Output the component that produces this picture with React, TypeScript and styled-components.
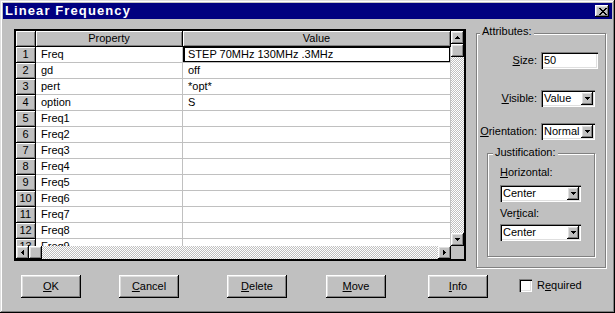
import React from "react";
import styled, { createGlobalStyle } from "styled-components";

const Global = createGlobalStyle`
  html, body { margin: 0; padding: 0; background: #c0c0c0; }
  body { font-family: "Liberation Sans", Arial, sans-serif; font-size: 11px; color: #000; }
  * { box-sizing: border-box; }
  u { text-decoration-thickness: 1px; text-underline-offset: 1px; }
`;

const raised = `box-shadow: inset -1px -1px #000, inset 1px 1px #fff, inset -2px -2px #808080, inset 2px 2px #dfdfdf;`;
const sunken = `box-shadow: inset 1px 1px #808080, inset 2px 2px #000, inset -1px -1px #fff, inset -2px -2px #dfdfdf;`;

const Window = styled.div`
  width: 615px;
  height: 313px;
  padding: 3px;
  background: #c0c0c0;
  box-shadow: inset -1px -1px #000, inset 1px 1px #dfdfdf, inset -2px -2px #808080, inset 2px 2px #fff;
  display: flex;
  flex-direction: column;
`;

const TitleBar = styled.div`
  height: 16px;
  background: #000080;
  display: flex;
  align-items: center;
  justify-content: space-between;
  padding: 0 3px 0 2px;
`;

const Title = styled.div`
  color: #fff;
  font-weight: bold;
  font-size: 13px;
  letter-spacing: 1.1px;
  line-height: 16px;
`;

const CloseButton = styled.div`
  width: 14px;
  height: 12px;
  background: #c0c0c0;
  ${raised}
  display: flex;
  align-items: center;
  justify-content: center;
  padding-left: 1px;
`;

const Main = styled.div`
  display: flex;
  align-items: flex-start;
  padding-left: 11px;
  gap: 10px;
`;

const GridFrame = styled.div`
  margin-top: 10px;
  width: 452px;
  height: 232px;
  border: 2px solid #000;
  display: grid;
  grid-template-columns: 435px 13px;
  grid-template-rows: 215px 13px;
  background: #c0c0c0;
`;

const Viewport = styled.div`
  overflow: hidden;
  background: #fff;
`;

const Row = styled.div`
  display: grid;
  grid-template-columns: 20px 147px 268px;
  height: 16px;
`;

const HeadCell = styled.div`
  background: #c0c0c0;
  border-right: 1px solid #000;
  border-bottom: 1px solid #000;
  box-shadow: inset 1px 1px #fff, inset -1px -1px #808080;
  display: flex;
  align-items: center;
  justify-content: center;
  line-height: 15px;
  white-space: nowrap;
  overflow: hidden;
`;

const Cell = styled.div<{ $focus?: boolean }>`
  border-right: 1px solid #c0c0c0;
  border-bottom: 1px solid #c0c0c0;
  padding-left: 5px;
  line-height: 15px;
  white-space: nowrap;
  overflow: hidden;
  ${(p) => (p.$focus ? "box-shadow: inset 2px 0 #000, inset 0 1px #000, inset -1px -1px #000;" : "")}
`;

const VScroll = styled.div`
  display: flex;
  flex-direction: column;
`;

const HScroll = styled.div`
  display: flex;
`;

const ScrollBtn = styled.div`
  width: 13px;
  height: 13px;
  flex: none;
  background: #c0c0c0;
  ${raised}
  display: flex;
  align-items: center;
  justify-content: center;
`;

const Thumb = styled.div`
  width: 13px;
  height: 13px;
  flex: none;
  background: #c0c0c0;
  ${raised}
`;

const Track = styled.div`
  flex: 1;
  background-color: #fff;
  background-image: repeating-conic-gradient(#c0c0c0 0 25%, #fff 0 50%);
  background-size: 2px 2px;
`;

const Corner = styled.div`
  background: #c0c0c0;
`;

const GroupBox = styled.div<{ $w: number; $h: number; $mt: number; $pad: string }>`
  position: relative;
  flex: none;
  width: ${(p) => p.$w}px;
  height: ${(p) => p.$h}px;
  margin-top: ${(p) => p.$mt}px;
  padding: ${(p) => p.$pad};
  border: 1px solid #808080;
  box-shadow: inset 1px 1px #fff, 1px 1px #fff;
`;

const GroupLabel = styled.div<{ $top: number; $left: number }>`
  position: absolute;
  top: ${(p) => p.$top}px;
  left: ${(p) => p.$left}px;
  padding: 0 2px;
  line-height: 13px;
  background: #c0c0c0;
  white-space: nowrap;
`;

const FieldRow = styled.div<{ $mt: number }>`
  display: grid;
  grid-template-columns: 1fr 57px;
  column-gap: 4px;
  align-items: center;
  margin: ${(p) => p.$mt}px -2px 0 -10px;
`;

const FieldLabel = styled.div`
  display: flex;
  justify-content: flex-end;
  white-space: nowrap;
  line-height: 17px;
`;

const TextInput = styled.div`
  width: 57px;
  height: 17px;
  background: #fff;
  ${sunken}
  padding: 2px 2px 2px 3px;
  line-height: 13px;
`;

const Combo = styled.div<{ $w: number; $mt?: number }>`
  width: ${(p) => p.$w}px;
  height: 17px;
  margin-top: ${(p) => p.$mt ?? 0}px;
  background: #fff;
  ${sunken}
  padding: 2px;
  display: flex;
`;

const ComboText = styled.div`
  flex: 1;
  padding-left: 1px;
  line-height: 13px;
  white-space: nowrap;
  overflow: hidden;
`;

const DropBtn = styled.div`
  width: 12px;
  flex: none;
  background: #c0c0c0;
  ${raised}
  display: flex;
  align-items: center;
  justify-content: center;
`;

const SubLabel = styled.div<{ $mt?: number }>`
  line-height: 13px;
  margin-top: ${(p) => p.$mt ?? 0}px;
  white-space: nowrap;
`;

const ButtonRow = styled.div`
  display: flex;
  align-items: center;
  margin-top: 7px;
  padding-left: 18px;
  height: 23px;
`;

const Button = styled.div<{ $ml: number }>`
  width: 60px;
  height: 23px;
  margin-left: ${(p) => p.$ml}px;
  background: #c0c0c0;
  ${raised}
  display: flex;
  align-items: center;
  justify-content: center;
  line-height: 13px;
`;

const CheckBox = styled.div<{ $ml: number }>`
  width: 13px;
  height: 13px;
  margin-left: ${(p) => p.$ml}px;
  margin-top: -3px;
  background: #fff;
  ${sunken}
`;

const CheckLabel = styled.div`
  margin-left: 5px;
  margin-top: -3px;
  line-height: 13px;
`;

type Dir = "up" | "down" | "left" | "right";

function Tri({ dir, n }: { dir: Dir; n: number }) {
  const w = 2 * n - 1;
  const rects: React.ReactNode[] = [];
  for (let i = 0; i < n; i++) {
    const len = 2 * i + 1;
    const off = n - 1 - i;
    const pos = dir === "up" || dir === "left" ? i : n - 1 - i;
    if (dir === "up" || dir === "down") {
      rects.push(<rect key={i} x={off} y={pos} width={len} height={1} />);
    } else {
      rects.push(<rect key={i} x={pos} y={off} width={1} height={len} />);
    }
  }
  const vert = dir === "up" || dir === "down";
  return (
    <svg width={vert ? w : n} height={vert ? n : w} shapeRendering="crispEdges" fill="#000">
      {rects}
    </svg>
  );
}

function CloseGlyph() {
  const rows = ["11000011", "01100110", "00111100", "00011000", "00111100", "01100110", "11000011"];
  return (
    <svg width={8} height={7} shapeRendering="crispEdges" fill="#000">
      {rows.flatMap((r, y) =>
        r.split("").map((c, x) => (c === "1" ? <rect key={`${x}-${y}`} x={x} y={y} width={1} height={1} /> : null))
      )}
    </svg>
  );
}

const data: [string, string][] = [
  ["Freq", "STEP 70MHz 130MHz .3MHz"],
  ["gd", "off"],
  ["pert", "*opt*"],
  ["option", "S"],
  ["Freq1", ""],
  ["Freq2", ""],
  ["Freq3", ""],
  ["Freq4", ""],
  ["Freq5", ""],
  ["Freq6", ""],
  ["Freq7", ""],
  ["Freq8", ""],
  ["Freq9", ""],
];

export default function App() {
  return (
    <>
      <Global />
      <Window>
        <TitleBar>
          <Title>Linear Frequency</Title>
          <CloseButton>
            <CloseGlyph />
          </CloseButton>
        </TitleBar>
        <Main>
          <GridFrame>
            <Viewport>
              <Row>
                <HeadCell />
                <HeadCell>Property</HeadCell>
                <HeadCell>Value</HeadCell>
              </Row>
              {data.map(([k, v], i) => (
                <Row key={i}>
                  <HeadCell>{i + 1}</HeadCell>
                  <Cell>{k}</Cell>
                  <Cell $focus={i === 0}>{v}</Cell>
                </Row>
              ))}
            </Viewport>
            <VScroll>
              <ScrollBtn>
                <Tri dir="up" n={3} />
              </ScrollBtn>
              <Thumb />
              <Track />
              <ScrollBtn>
                <Tri dir="down" n={3} />
              </ScrollBtn>
            </VScroll>
            <HScroll>
              <ScrollBtn>
                <Tri dir="left" n={3} />
              </ScrollBtn>
              <Thumb />
              <Track />
              <ScrollBtn>
                <Tri dir="right" n={3} />
              </ScrollBtn>
            </HScroll>
            <Corner />
          </GridFrame>

          <GroupBox $w={130} $h={235} $mt={14} $pad="18px 9px 0 10px">
            <GroupLabel $top={-9} $left={3}>Attributes:</GroupLabel>
            <FieldRow $mt={0}>
              <FieldLabel>
                <u>S</u>ize:
              </FieldLabel>
              <TextInput>50</TextInput>
            </FieldRow>
            <FieldRow $mt={21}>
              <FieldLabel>
                <u>V</u>isible:
              </FieldLabel>
              <Combo $w={54}>
                <ComboText>Value</ComboText>
                <DropBtn>
                  <Tri dir="down" n={3} />
                </DropBtn>
              </Combo>
            </FieldRow>
            <FieldRow $mt={16}>
              <FieldLabel>
                <u>O</u>rientation:
              </FieldLabel>
              <Combo $w={54}>
                <ComboText>Normal</ComboText>
                <DropBtn>
                  <Tri dir="down" n={3} />
                </DropBtn>
              </Combo>
            </FieldRow>
            <GroupBox $w={108} $h={104} $mt={13} $pad="12px 0 0 12px">
              <GroupLabel $top={-8} $left={5}>Justification:</GroupLabel>
              <SubLabel>
                <u>H</u>orizontal:
              </SubLabel>
              <Combo $w={81} $mt={6}>
                <ComboText>Center</ComboText>
                <DropBtn>
                  <Tri dir="down" n={3} />
                </DropBtn>
              </Combo>
              <SubLabel $mt={5}>
                Ver<u>t</u>ical:
              </SubLabel>
              <Combo $w={81} $mt={4}>
                <ComboText>Center</ComboText>
                <DropBtn>
                  <Tri dir="down" n={3} />
                </DropBtn>
              </Combo>
            </GroupBox>
          </GroupBox>
        </Main>
        <ButtonRow>
          <Button $ml={0}>
            <span>
              <u>O</u>K
            </span>
          </Button>
          <Button $ml={38}>
            <span>
              <u>C</u>ancel
            </span>
          </Button>
          <Button $ml={48}>
            <span>
              <u>D</u>elete
            </span>
          </Button>
          <Button $ml={39}>
            <span>
              <u>M</u>ove
            </span>
          </Button>
          <Button $ml={42}>
            <span>
              <u>I</u>nfo
            </span>
          </Button>
          <CheckBox $ml={31} />
          <CheckLabel>
            R<u>e</u>quired
          </CheckLabel>
        </ButtonRow>
      </Window>
    </>
  );
}
